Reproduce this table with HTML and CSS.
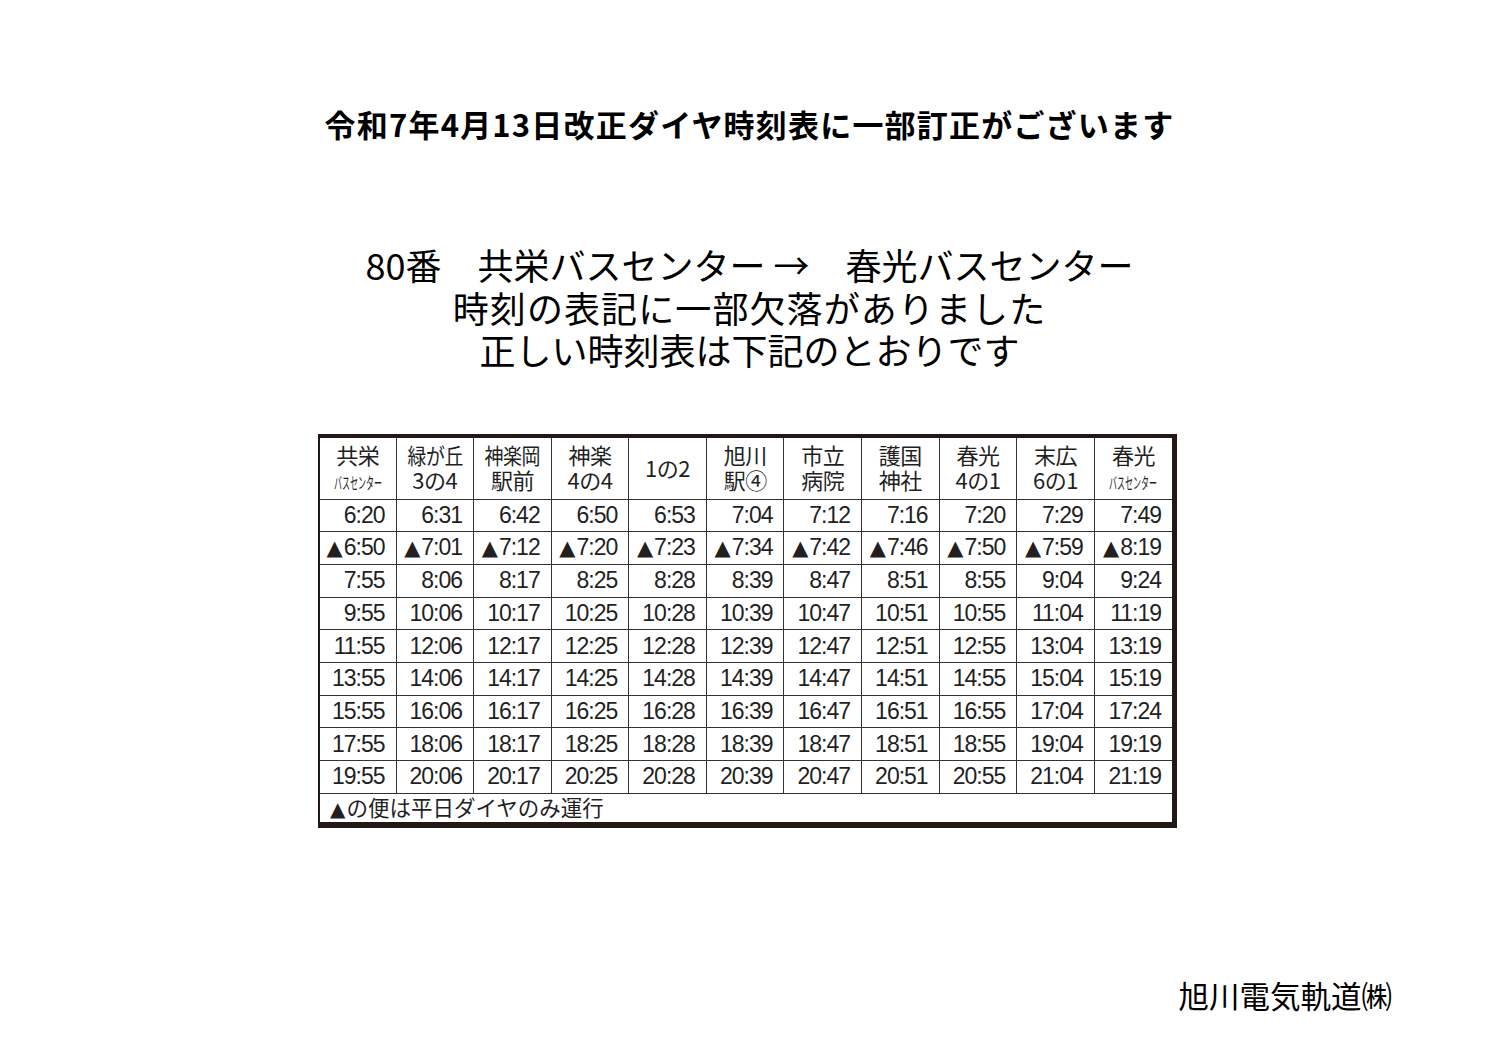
FILE: index.html
```html
<!DOCTYPE html>
<html lang="ja">
<head>
<meta charset="utf-8">
<title>時刻表訂正</title>
<link rel="stylesheet" href="styles.css">
</head>
<body>
<div class="page">
  <h1 class="title">令和7年4月13日改正ダイヤ時刻表に一部訂正がございます</h1>

  <div class="notice">
    <p class="notice-line">80番　共栄バスセンター →　春光バスセンター</p>
    <p class="notice-line notice-line--wide">時刻の表記に一部欠落がありました</p>
    <p class="notice-line">正しい時刻表は下記のとおりです</p>
  </div>

  <div class="timetable-frame">
    <table class="timetable">
      <colgroup>
        <col class="col-first">
        <col><col><col><col><col><col><col><col><col><col>
      </colgroup>
      <thead>
        <tr>
          <th>共栄<br><span class="small-wrap"><span class="small">バスセンター</span></span></th>
          <th><span class="cond">緑が丘</span><br>3の4</th>
          <th><span class="cond">神楽岡</span><br>駅前</th>
          <th>神楽<br>4の4</th>
          <th>1の2</th>
          <th>旭川<br>駅④</th>
          <th>市立<br>病院</th>
          <th>護国<br>神社</th>
          <th>春光<br>4の1</th>
          <th>末広<br>6の1</th>
          <th>春光<br><span class="small-wrap"><span class="small">バスセンター</span></span></th>
        </tr>
      </thead>
      <tbody>
        <tr><td>6:20</td><td>6:31</td><td>6:42</td><td>6:50</td><td>6:53</td><td>7:04</td><td>7:12</td><td>7:16</td><td>7:20</td><td>7:29</td><td>7:49</td></tr>
        <tr><td><span class="tri">▲</span>6:50</td><td><span class="tri">▲</span>7:01</td><td><span class="tri">▲</span>7:12</td><td><span class="tri">▲</span>7:20</td><td><span class="tri">▲</span>7:23</td><td><span class="tri">▲</span>7:34</td><td><span class="tri">▲</span>7:42</td><td><span class="tri">▲</span>7:46</td><td><span class="tri">▲</span>7:50</td><td><span class="tri">▲</span>7:59</td><td><span class="tri">▲</span>8:19</td></tr>
        <tr><td>7:55</td><td>8:06</td><td>8:17</td><td>8:25</td><td>8:28</td><td>8:39</td><td>8:47</td><td>8:51</td><td>8:55</td><td>9:04</td><td>9:24</td></tr>
        <tr><td>9:55</td><td>10:06</td><td>10:17</td><td>10:25</td><td>10:28</td><td>10:39</td><td>10:47</td><td>10:51</td><td>10:55</td><td>11:04</td><td>11:19</td></tr>
        <tr><td>11:55</td><td>12:06</td><td>12:17</td><td>12:25</td><td>12:28</td><td>12:39</td><td>12:47</td><td>12:51</td><td>12:55</td><td>13:04</td><td>13:19</td></tr>
        <tr><td>13:55</td><td>14:06</td><td>14:17</td><td>14:25</td><td>14:28</td><td>14:39</td><td>14:47</td><td>14:51</td><td>14:55</td><td>15:04</td><td>15:19</td></tr>
        <tr><td>15:55</td><td>16:06</td><td>16:17</td><td>16:25</td><td>16:28</td><td>16:39</td><td>16:47</td><td>16:51</td><td>16:55</td><td>17:04</td><td>17:24</td></tr>
        <tr><td>17:55</td><td>18:06</td><td>18:17</td><td>18:25</td><td>18:28</td><td>18:39</td><td>18:47</td><td>18:51</td><td>18:55</td><td>19:04</td><td>19:19</td></tr>
        <tr><td>19:55</td><td>20:06</td><td>20:17</td><td>20:25</td><td>20:28</td><td>20:39</td><td>20:47</td><td>20:51</td><td>20:55</td><td>21:04</td><td>21:19</td></tr>
      </tbody>
      <tfoot>
        <tr><td colspan="11" class="note"><span class="tri">▲</span>の便は平日ダイヤのみ運行</td></tr>
      </tfoot>
    </table>
  </div>

  <p class="company">旭川電気軌道㈱</p>
</div>
</body>
</html>
```

FILE: styles.css
```css
html, body {
  margin: 0;
  padding: 0;
  background: #ffffff;
}

.page {
  width: 1499px;
  min-height: 1062px;
  color: #111111;
  font-family: "Noto Sans CJK JP", "Noto Sans", sans-serif;
  overflow: hidden;
}

.title {
  margin: 107px 0 0 0;
  font-size: 31px;
  line-height: 34px;
  font-weight: 700;
  text-align: center;
  letter-spacing: 1.2px;
  color: #000000;
}

.notice {
  margin-top: 102px;
  text-align: center;
}

.notice-line {
  margin: 0;
  font-size: 36px;
  line-height: 42.5px;
  font-weight: 400;
  color: #000000;
}

.notice-line--wide {
  letter-spacing: 1.1px;
}

.timetable-frame {
  margin: 63px 0 0 318px;
  width: 852px;
  border-style: solid;
  border-color: #231815;
  border-width: 4px 5px 6px 2px;
  background: #ffffff;
}

.timetable {
  width: 852px;
  border-collapse: collapse;
  border-style: hidden;
  table-layout: fixed;
  color: #231f1f;
}

.col-first {
  width: 76px;
}

.timetable th,
.timetable td {
  border: 1px solid #333333;
  padding: 0;
}

.timetable th {
  height: 59px;
  font-family: "Noto Sans CJK JP", sans-serif;
  font-weight: 400;
  font-size: 22px;
  line-height: 25px;
  text-align: center;
  vertical-align: middle;
  padding-bottom: 2px;
  letter-spacing: -0.5px;
}

.cond {
  display: inline-block;
  transform: scaleX(0.86);
  transform-origin: center center;
}

.small-wrap {
  display: inline-block;
  width: 48px;
  height: 25px;
  vertical-align: top;
  text-align: left;
  white-space: nowrap;
}

.small {
  display: inline-block;
  font-size: 16px;
  letter-spacing: 0;
  transform: scaleX(0.5);
  transform-origin: left center;
  padding-top: 2px;
}

.timetable tbody td {
  height: 30.7px;
  text-align: right;
  padding-right: 11px;
  padding-bottom: 1px;
  font-family: "Liberation Sans", Arial, sans-serif;
  font-size: 23px;
  letter-spacing: -1px;
  line-height: 26px;
  vertical-align: middle;
}

.tri {
  font-family: "DejaVu Sans", sans-serif;
  font-size: 21px;
  letter-spacing: 0;
  margin-right: 1px;
}

.timetable .note {
  height: 28px;
  text-align: left;
  padding-left: 10px;
  font-family: "Noto Sans CJK JP", sans-serif;
  font-size: 21.5px;
  line-height: 26px;
  vertical-align: middle;
}

.note .tri {
  font-size: 20px;
}

.company {
  margin: 150px 107px 0 0;
  text-align: right;
  font-size: 30.5px;
  line-height: 34px;
  color: #000000;
}
```
